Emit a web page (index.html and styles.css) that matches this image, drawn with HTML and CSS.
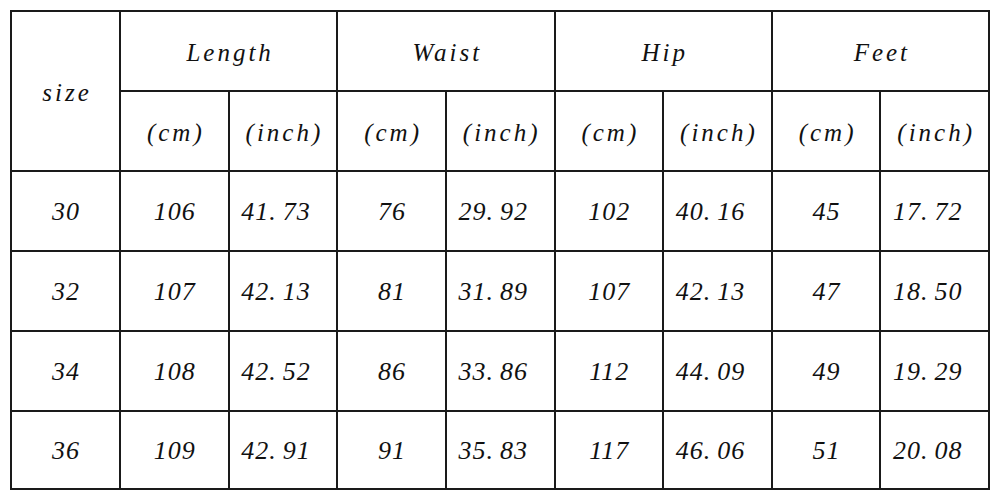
FILE: index.html
```html
<!DOCTYPE html>
<html>
<head>
<meta charset="utf-8">
<link rel="stylesheet" href="styles.css">
</head>
<body>
<table class="size-table">
  <colgroup>
    <col class="c-size">
    <col><col><col><col><col><col><col><col>
  </colgroup>
  <tr class="row-head">
    <td rowspan="2" class="hd">size</td>
    <td colspan="2" class="hd">Length</td>
    <td colspan="2" class="hd">Waist</td>
    <td colspan="2" class="hd">Hip</td>
    <td colspan="2" class="hd">Feet</td>
  </tr>
  <tr class="row-head">
    <td class="hd">(cm)</td><td class="hd">(inch)</td>
    <td class="hd">(cm)</td><td class="hd">(inch)</td>
    <td class="hd">(cm)</td><td class="hd">(inch)</td>
    <td class="hd">(cm)</td><td class="hd">(inch)</td>
  </tr>
  <tr>
    <td>30</td><td>106</td><td class="dec">41<span class="dot">.</span>73</td><td>76</td><td class="dec">29<span class="dot">.</span>92</td><td>102</td><td class="dec">40<span class="dot">.</span>16</td><td>45</td><td class="dec">17<span class="dot">.</span>72</td>
  </tr>
  <tr>
    <td>32</td><td>107</td><td class="dec">42<span class="dot">.</span>13</td><td>81</td><td class="dec">31<span class="dot">.</span>89</td><td>107</td><td class="dec">42<span class="dot">.</span>13</td><td>47</td><td class="dec">18<span class="dot">.</span>50</td>
  </tr>
  <tr>
    <td>34</td><td>108</td><td class="dec">42<span class="dot">.</span>52</td><td>86</td><td class="dec">33<span class="dot">.</span>86</td><td>112</td><td class="dec">44<span class="dot">.</span>09</td><td>49</td><td class="dec">19<span class="dot">.</span>29</td>
  </tr>
  <tr class="row-last">
    <td>36</td><td>109</td><td class="dec">42<span class="dot">.</span>91</td><td>91</td><td class="dec">35<span class="dot">.</span>83</td><td>117</td><td class="dec">46<span class="dot">.</span>06</td><td>51</td><td class="dec">20<span class="dot">.</span>08</td>
  </tr>
</table>
</body>
</html>
```

FILE: styles.css
```css
html, body {
  margin: 0;
  padding: 0;
  background: #ffffff;
}
body {
  padding: 10px 0 0 10px;
}
.size-table {
  width: 980px;
  table-layout: fixed;
  border-collapse: collapse;
  font-family: "Liberation Serif", "Times New Roman", serif;
  font-style: italic;
  color: #111111;
}
.c-size {
  width: 109px;
}
.size-table td {
  border: 2px solid #1a1a1a;
  height: 80px;
  padding: 0;
  text-align: center;
  vertical-align: middle;
  font-size: 26px;
  letter-spacing: 1px;
  padding-left: 1px;
  padding-top: 2px;
  box-sizing: border-box;
}
.size-table .row-last td {
  height: 78px;
}
.size-table td.hd {
  font-size: 25px;
  letter-spacing: 3px;
  padding-left: 3px;
  padding-top: 4px;
}
.size-table td.dec {
  padding-right: 15px;
}
.dot {
  margin-right: 6px;
}
```
